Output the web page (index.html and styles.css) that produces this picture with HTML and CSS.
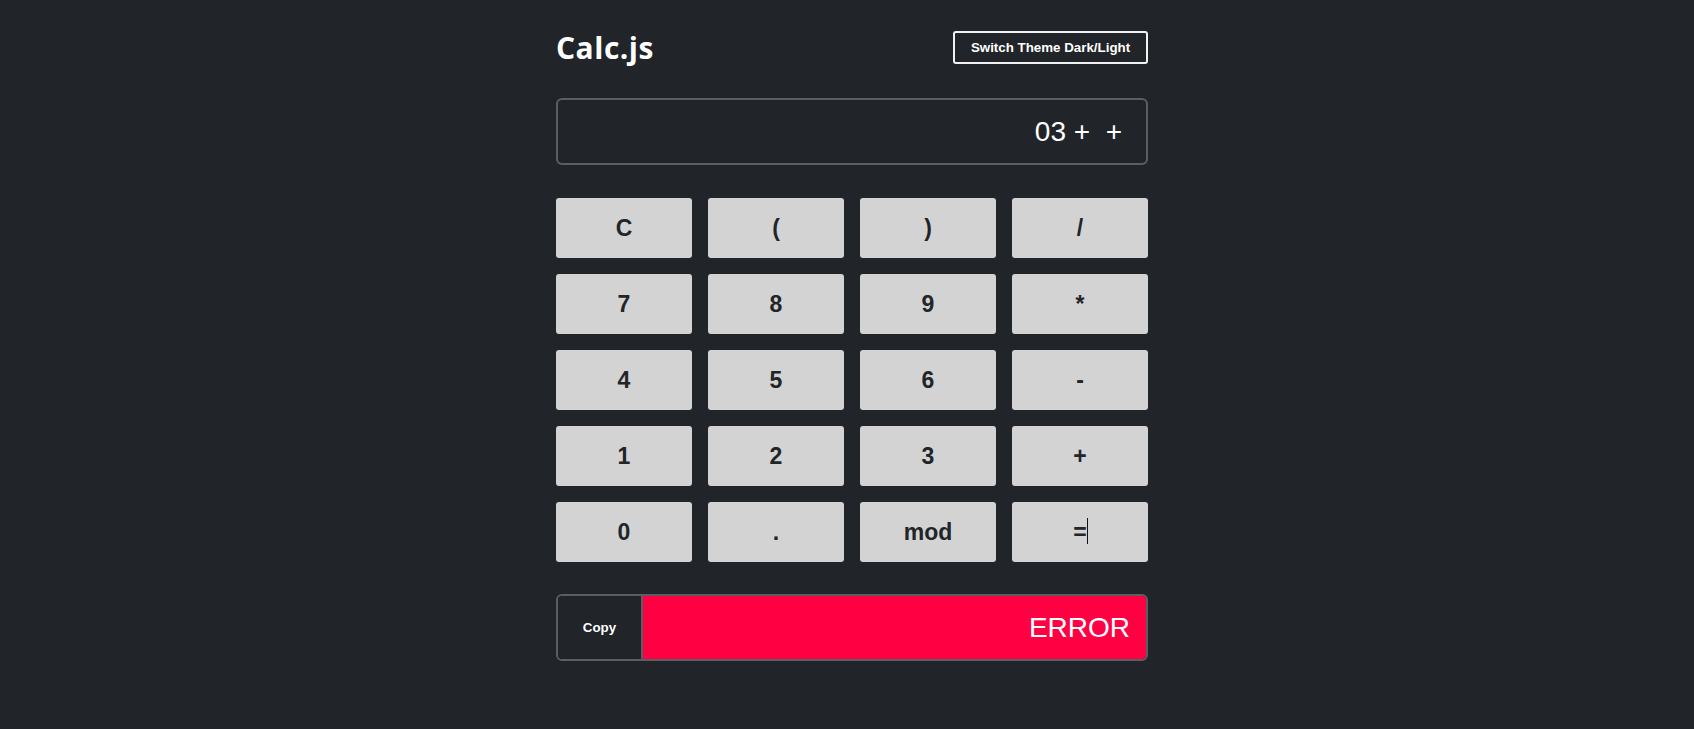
FILE: index.html
```html
<!DOCTYPE html>
<html lang="en">
<head>
<meta charset="utf-8">
<title>Calc.js</title>
<link rel="stylesheet" href="styles.css">
</head>
<body>
<main class="app">
  <header class="header">
    <h1 class="title">Calc.js</h1>
    <button class="theme-btn" type="button">Switch Theme Dark/Light</button>
  </header>
  <div class="display">03 +&nbsp; +</div>
  <section class="keys">
    <button class="key" type="button">C</button>
    <button class="key" type="button">(</button>
    <button class="key" type="button">)</button>
    <button class="key" type="button">/</button>
    <button class="key" type="button">7</button>
    <button class="key" type="button">8</button>
    <button class="key" type="button">9</button>
    <button class="key" type="button">*</button>
    <button class="key" type="button">4</button>
    <button class="key" type="button">5</button>
    <button class="key" type="button">6</button>
    <button class="key" type="button">-</button>
    <button class="key" type="button">1</button>
    <button class="key" type="button">2</button>
    <button class="key" type="button">3</button>
    <button class="key" type="button">+</button>
    <button class="key" type="button">0</button>
    <button class="key" type="button">.</button>
    <button class="key" type="button">mod</button>
    <button class="key key-eq" type="button">=<span class="caret"></span></button>
  </section>
  <div class="result">
    <button class="copy-btn" type="button">Copy</button>
    <div class="result-value">ERROR</div>
  </div>
</main>
</body>
</html>
```
FILE: styles.css
```css
html, body {
  margin: 0;
  padding: 0;
  background: #212429;
}
body {
  padding-left: 10px;
  font-family: "Liberation Sans", Arial, sans-serif;
}
.app {
  width: 592px;
  margin: 0 auto;
  padding-top: 31px;
}
.header {
  display: flex;
  justify-content: space-between;
  align-items: center;
  height: 33px;
}
.title {
  margin: 0;
  font-family: "Open Sans", "Noto Sans", sans-serif;
  font-weight: 700;
  font-size: 30px;
  line-height: 33px;
  color: #ffffff;
  letter-spacing: 0.5px;
}
.theme-btn {
  box-sizing: border-box;
  height: 33px;
  width: 195px;
  padding: 0;
  background: transparent;
  border: 2px solid #f2f2f2;
  border-radius: 3px;
  color: #ffffff;
  font-family: "Liberation Sans", Arial, sans-serif;
  font-weight: 700;
  font-size: 13.333px;
}
.display {
  box-sizing: border-box;
  margin-top: 34px;
  height: 67px;
  border: 2px solid #5b5e62;
  border-radius: 6px;
  padding: 0 24px;
  display: flex;
  align-items: center;
  justify-content: flex-end;
  color: #ffffff;
  font-size: 28px;
  white-space: pre;
}
.keys {
  margin-top: 33px;
  display: grid;
  grid-template-columns: repeat(4, 1fr);
  grid-auto-rows: 60px;
  gap: 16px;
}
.key {
  position: relative;
  border: none;
  border-radius: 3px;
  background: #d3d3d3;
  color: #212529;
  font-family: "Liberation Sans", Arial, sans-serif;
  font-weight: 700;
  font-size: 23px;
  padding: 0;
}
.caret {
  position: absolute;
  left: 75px;
  top: 16px;
  width: 1px;
  height: 26px;
  background: #111;
}
.result {
  box-sizing: border-box;
  margin-top: 32px;
  height: 67px;
  border: 2px solid #5b5e62;
  border-radius: 6px;
  overflow: hidden;
  display: flex;
}
.copy-btn {
  width: 85px;
  flex: none;
  border: none;
  border-right: 2px solid #5b5e62;
  background: #212429;
  color: #ffffff;
  font-family: "Liberation Sans", Arial, sans-serif;
  font-weight: 700;
  font-size: 13.333px;
  padding: 0;
}
.result-value {
  flex: 1;
  background: #ff0043;
  color: #ffffff;
  display: flex;
  align-items: center;
  justify-content: flex-end;
  padding-right: 16px;
  font-size: 28px;
}
```
